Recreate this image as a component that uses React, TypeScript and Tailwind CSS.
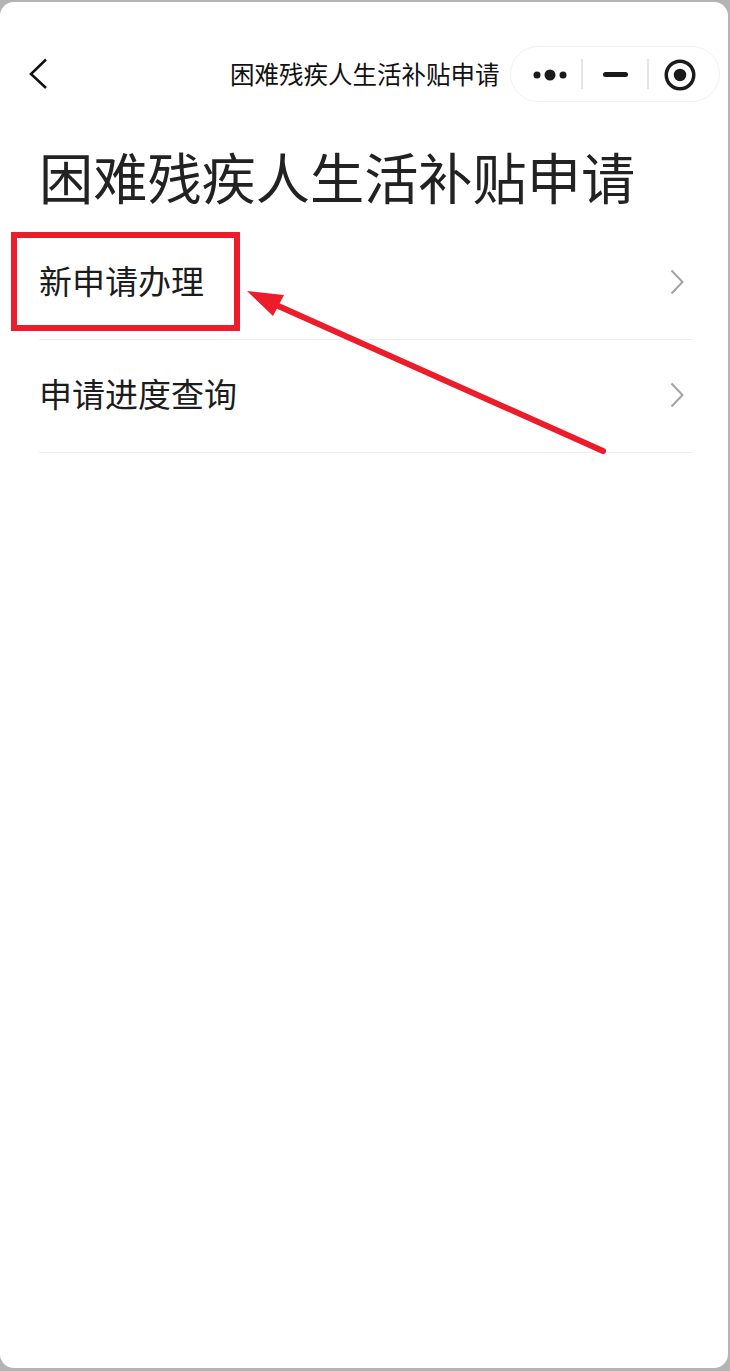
import React from 'react';

const rows = ['新申请办理', '申请进度查询'];

function ChevronRight() {
  return (
    <svg width="14" height="26" viewBox="0 0 14 26" fill="none" className="mb-[2px] shrink-0">
      <path d="M1.5 1.5 L12.5 13 L1.5 24.5" stroke="#a3a3a3" strokeWidth="2" />
    </svg>
  );
}

function Capsule() {
  return (
    <div className="flex h-[56px] w-[210px] items-center rounded-full border border-[#f0f0f0] bg-white">
      <div className="flex w-[70px] justify-center pl-[7px] pt-[1px]">
        <svg width="38" height="14" viewBox="0 0 38 14" fill="#1a1a1a">
          <circle cx="6" cy="7" r="3.5" />
          <circle cx="19" cy="7" r="5.5" />
          <circle cx="32" cy="7" r="3.5" />
        </svg>
      </div>
      <div className="h-[30px] w-[2px] bg-[#e5e5e5]" />
      <div className="flex w-[64px] justify-center pt-[1px]">
        <div className="h-[5px] w-[25px] rounded-full bg-[#1a1a1a]" />
      </div>
      <div className="h-[30px] w-[2px] bg-[#e5e5e5]" />
      <div className="flex flex-1 justify-center pr-[9px] pt-[1px]">
        <svg width="32" height="32" viewBox="0 0 32 32" fill="none">
          <circle cx="16" cy="16" r="13.75" stroke="#1a1a1a" strokeWidth="3.5" />
          <circle cx="16" cy="16" r="6.25" fill="#1a1a1a" />
        </svg>
      </div>
    </div>
  );
}

export default function App() {
  return (
    <div
      className="relative h-[1371px] w-[730px] overflow-hidden bg-[#b4b4b4] pt-[2px] pr-[2px] pb-[3px]"
      style={{ fontFamily: '"Noto Sans CJK SC", "Noto Sans", sans-serif' }}
    >
      <div className="h-full w-full rounded-[14px] bg-white">
        {/* nav bar */}
        <div className="flex h-[100px] items-end">
          <div className="flex h-[56px] w-full items-center pl-[29px] pr-[8px]">
            <svg width="19" height="32" viewBox="0 0 19 32" fill="none" className="mb-[1px] shrink-0">
              <path d="M17 1.5 L2 16 L17 30" stroke="#111111" strokeWidth="2.5" />
            </svg>
            <div className="ml-[182px] w-[270px] whitespace-nowrap text-[24.5px] leading-none text-[#111111]">
              困难残疾人生活补贴申请
            </div>
            <div className="ml-[10px]">
              <Capsule />
            </div>
          </div>
        </div>

        <h1 className="mt-[44px] whitespace-nowrap pl-[39px] text-[54.2px] leading-[60px] font-normal text-[#222222]">
          困难残疾人生活补贴申请
        </h1>

        <div className="mt-[21px] pr-[36px] pl-[39px]">
          {rows.map((label) => (
            <div
              key={label}
              className="flex h-[113px] items-center justify-between border-b border-[#ececec] pr-[8px] text-[33px] text-[#1c1c1c]"
            >
              <span className="mb-[6px] leading-none">{label}</span>
              <ChevronRight />
            </div>
          ))}
        </div>
      </div>

      {/* red annotation */}
      <div className="absolute top-[232px] left-[11px] h-[99px] w-[229px] border-[6px] border-[#ec1c2b]" />
      <svg className="absolute top-0 left-0" width="730" height="1371" viewBox="0 0 730 1371" fill="none">
        <path d="M603 451 L276 305" stroke="#ec1c2b" strokeWidth="6" strokeLinecap="round" />
        <path d="M247 291 L284 295 L273 316 Z" fill="#ec1c2b" />
      </svg>
    </div>
  );
}
